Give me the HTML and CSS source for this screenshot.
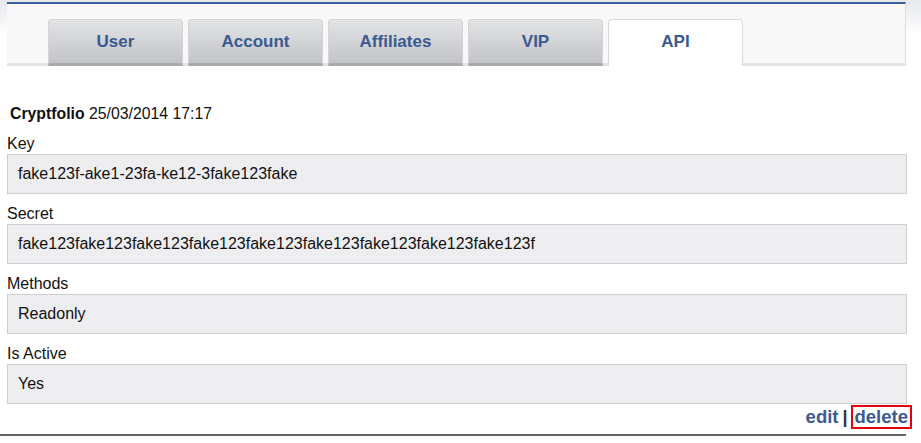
FILE: index.html
```html
<!DOCTYPE html>
<html>
<head>
<meta charset="utf-8">
<link rel="stylesheet" href="styles.css">
</head>
<body>
<div class="page">
  <div class="tabs-panel">
    <div class="tabs">
      <div class="tab">User</div>
      <div class="tab">Account</div>
      <div class="tab">Affiliates</div>
      <div class="tab">VIP</div>
      <div class="tab active">API</div>
    </div>
  </div>
  <div class="content">
    <div class="title"><b>Cryptfolio</b> 25/03/2014 17:17</div>
    <div class="field">
      <div class="label">Key</div>
      <div class="value">fake123f-ake1-23fa-ke12-3fake123fake</div>
    </div>
    <div class="field">
      <div class="label">Secret</div>
      <div class="value">fake123fake123fake123fake123fake123fake123fake123fake123fake123f</div>
    </div>
    <div class="field">
      <div class="label">Methods</div>
      <div class="value">Readonly</div>
    </div>
    <div class="field last">
      <div class="label">Is Active</div>
      <div class="value">Yes</div>
    </div>
    <div class="actions">
      <a class="link">edit</a><span class="sep">|</span><a class="link delete">delete</a>
    </div>
  </div>
  <div class="rule"></div>
</div>
</body>
</html>
```
FILE: styles.css
```css
html, body {
  margin: 0;
  padding: 0;
  background: #ffffff;
}
body {
  font-family: "Liberation Sans", Arial, sans-serif;
  color: #111;
  width: 921px;
  height: 443px;
  overflow: hidden;
  background: linear-gradient(to bottom, #e6e8ec 0px, #f3f4f6 20px, #ffffff 34px) no-repeat;
  background-size: 100% 40px;
}
.page {
  padding: 0 0 0 7px;
}
.tabs-panel {
  width: 898px;
  height: 59px;
  margin-top: 2px;
  border-top: 2px solid #3a5d96;
  border-right: 1px solid #dcdcdc;
  background: #f8f8f8;
  border-bottom: 3px solid #e4e4e4;
}
.tabs {
  display: flex;
  gap: 5px;
  padding-left: 41px;
  padding-top: 15px;
}
.tab {
  width: 135px;
  height: 47px;
  box-sizing: border-box;
  border-radius: 4px 4px 0 0;
  background: linear-gradient(to bottom, #e3e4e6 0%, #cfd0d3 60%, #c3c4c8 100%);
  border: 1px solid #d4d4d6;
  border-bottom: 3px solid #a9aaae;
  font-weight: bold;
  font-size: 17px;
  color: #395a91;
  display: flex;
  align-items: center;
  justify-content: center;
  padding-top: 1px;
}
.tab.active {
  background: #ffffff;
  border: 1px solid #d8d8d8;
  border-bottom: none;
  padding-top: 0;
  padding-bottom: 3px;
}
.content {
  width: 900px;
  padding-top: 39px;
}
.title {
  font-size: 15.8px;
  padding-left: 3px;
  line-height: 18px;
  margin-bottom: 11px;
}
.title b {
  font-weight: bold;
}
.field .label {
  font-size: 16px;
  line-height: 19px;
  margin-bottom: 1px;
}
.field {
  margin-bottom: 10px;
}
.field.last {
  margin-bottom: 0;
}
.field .value {
  height: 40px;
  box-sizing: border-box;
  border: 1px solid #cfcfd2;
  background: #eeeef0;
  font-size: 16px;
  line-height: 38px;
  padding-left: 10px;
}
.actions {
  display: flex;
  justify-content: flex-end;
  align-items: center;
  height: 24px;
  margin-top: 1px;
  margin-right: -5px;
}
.link {
  font-size: 18.5px;
  font-weight: bold;
  color: #3a5b93;
  cursor: pointer;
}
.sep {
  font-size: 18px;
  font-weight: bold;
  color: #333;
  margin: 0 3px 0 4px;
}
.delete {
  border: 2px solid #e8000d;
  padding: 0 2px;
  line-height: 20px;
}
.rule {
  width: 899px;
  margin-left: -7px;
  padding-left: 7px;
  box-sizing: content-box;
  height: 2px;
  background: #666;
  margin-top: 5px;
}
```
